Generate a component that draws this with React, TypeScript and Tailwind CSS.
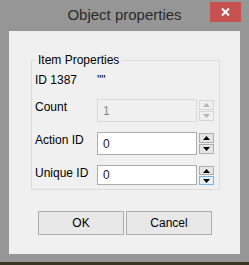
import React from "react";

const Arrow = ({ dir, color }: { dir: "up" | "down"; color: string }) => (
  <svg width="7" height="4" viewBox="0 0 7 4">
    {dir === "up" ? (
      <polygon points="3.5,0 7,4 0,4" fill={color} />
    ) : (
      <polygon points="0,0 7,0 3.5,4" fill={color} />
    )}
  </svg>
);

const Spinner = ({
  disabled,
  hoverDown,
  small,
}: {
  disabled?: boolean;
  hoverDown?: boolean;
  small?: boolean;
}) => {
  const btn = small ? "h-[9px]" : "h-[10px]";
  const base = disabled
    ? "border-[#d5d5d5] bg-[#f0f0f0]"
    : "border-[#adadad] bg-[#e5e5e5]";
  const arrow = disabled ? "#b5b5b5" : "#000000";
  return (
    <div className="ml-[2px] mt-[1px] flex flex-col gap-[1px]">
      <div className={`${btn} w-[15px] border ${base} flex items-center justify-center`}>
        <Arrow dir="up" color={arrow} />
      </div>
      <div
        className={`${btn} w-[15px] border ${
          hoverDown ? "border-[#7eb4ea] bg-[#e5f1fb]" : base
        } flex items-center justify-center`}
      >
        <Arrow dir="down" color={arrow} />
      </div>
    </div>
  );
};

const NumberRow = ({
  label,
  value,
  disabled,
  hoverDown,
  tall = true,
  className = "",
}: {
  label: string;
  value: string;
  disabled?: boolean;
  hoverDown?: boolean;
  tall?: boolean;
  className?: string;
}) => (
  <div className={`flex items-start ${className}`}>
    <span className="w-[62px] leading-[16px] text-black">{label}</span>
    <div
      className={`w-[100px] ${tall ? "h-[23px]" : "h-[20px]"} border flex items-center pl-[5px] ${
        disabled
          ? "border-[#d9d9d9] bg-[#f0f0f0] text-[#8a8a8a]"
          : "border-[#acacac] bg-white text-[#1a1a2e]"
      }`}
    >
      {value}
    </div>
    <Spinner disabled={disabled} hoverDown={hoverDown} small={!tall} />
  </div>
);

export default function App() {
  return (
    <div className="w-[249px] h-[265px] bg-[#969696] flex flex-col font-['Liberation_Sans',Arial,sans-serif] text-[12px] overflow-hidden">
      {/* title bar */}
      <div className="relative h-[31px] flex">
        <div className="ml-[9px] w-[231px] flex items-center justify-center pb-[1px] text-[15px] text-[#2b2b2b]">
          Object properties
        </div>
        <div className="absolute left-[210px] top-[2px] w-[31px] h-[20px] bg-[#c75050] flex items-center justify-center">
          <svg width="9" height="8" viewBox="0 0 9 8">
            <path d="M1 0.5 L8 7.5 M8 0.5 L1 7.5" stroke="#ffffff" strokeWidth="2" />
          </svg>
        </div>
      </div>

      {/* client area */}
      <div className="ml-[9px] w-[231px] h-[223px] bg-[#f0f0f0] flex flex-col">
        <div className="relative ml-[22px] mt-[29px] w-[189px] h-[130px] border border-[#dcdcdc]">
          <span className="absolute left-[4px] top-[-9px] px-[2px] leading-[16px] bg-[#f0f0f0] text-black">
            Item Properties
          </span>
          <div className="flex flex-col pl-[3px]">
            <div className="mt-[11px] flex leading-[16px] text-black">
              <span className="w-[62px]">ID 1387</span>
              <span>""</span>
            </div>
            <NumberRow className="mt-[11px]" label="Count" value="1" disabled />
            <NumberRow className="mt-[10px]" label="Action ID" value="0" />
            <NumberRow className="mt-[10px]" label="Unique ID" value="0" hoverDown tall={false} />
          </div>
        </div>

        <div className="ml-[29px] mt-[21px] flex gap-[2px]">
          <button className="w-[86px] h-[24px] border border-[#adadad] bg-[#e8e8e8] text-black">
            OK
          </button>
          <button className="w-[86px] h-[24px] border border-[#adadad] bg-[#e8e8e8] text-black">
            Cancel
          </button>
        </div>
      </div>

      <div className="mt-auto h-[3px] bg-[#3b3224]" />
    </div>
  );
}
